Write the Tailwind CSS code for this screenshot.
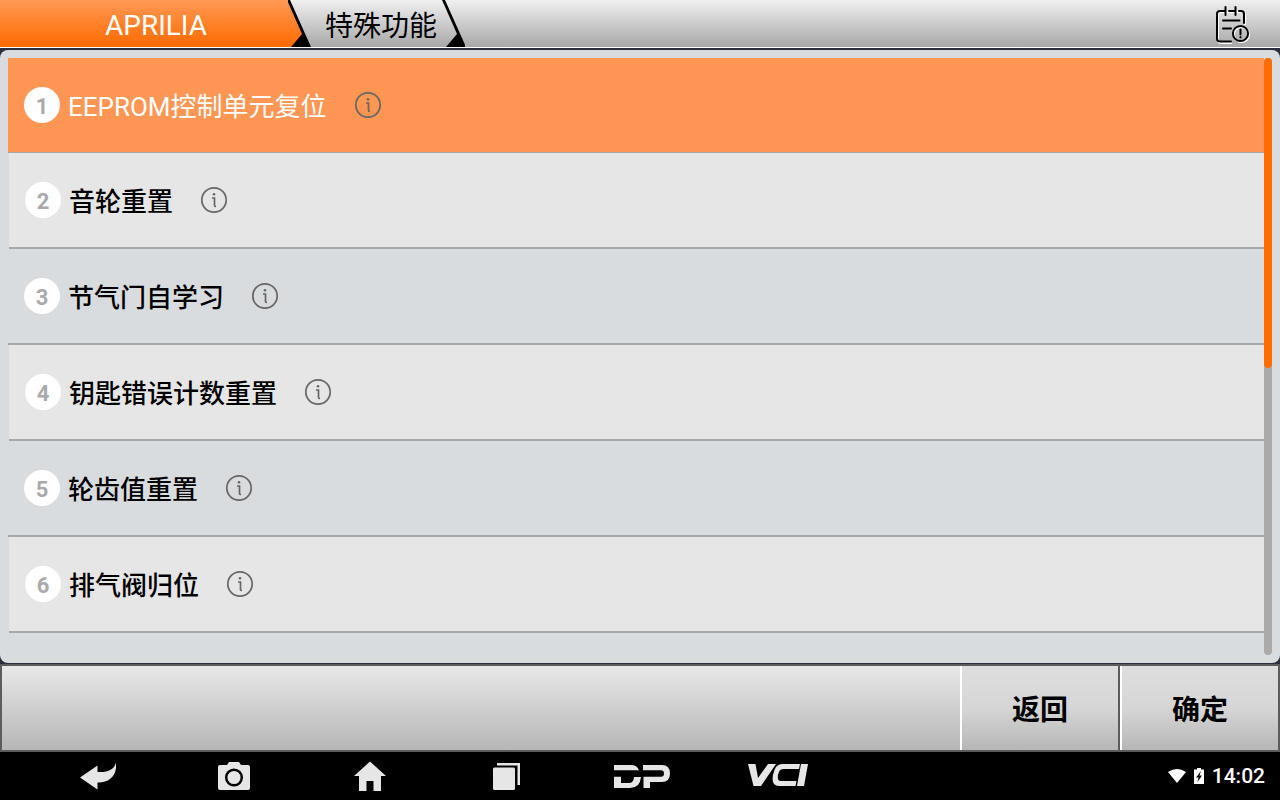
<!DOCTYPE html>
<html lang="zh">
<head>
    <meta charset="UTF-8">
    <meta name="viewport" content="width=device-width, initial-scale=1.0">
    <title>特殊功能</title>
    <script src="https://cdn.jsdelivr.net/npm/@tailwindcss/browser@4"></script>
</head>
<body class="h-screen flex flex-col bg-[#2b2e3b] text-black overflow-hidden font-[Roboto,'Noto_Sans_CJK_SC',sans-serif]">

    <svg class="hidden">
        <symbol id="info" viewBox="0 0 28 28">
            <circle cx="14" cy="14" r="12.2" fill="none" stroke="#666" stroke-width="1.7"/>
            <circle cx="14" cy="8.2" r="1.3" fill="#666"/>
            <path d="M12 12h2.500v7.500q0 1 1.500 1" fill="none" stroke="#666" stroke-width="1.7"/>
        </symbol>
    </svg>

    <!-- 顶部标签栏 -->
    <header class="h-12 shrink-0 flex border-b border-white bg-linear-to-b/srgb from-[#f0f0f0] to-[#a8a8a8] text-[28px]">
        <nav class="flex">
            <a href="#" class="w-72 flex items-center justify-center pl-6 pt-1 text-white bg-linear-to-b/srgb from-[#ff9955] to-[#ff6a00]">APRILIA</a>
            <svg class="w-6 h-full" viewBox="0 0 24 47" preserveAspectRatio="none">
                <defs>
                    <linearGradient id="orange" x1="0" y1="0" x2="0" y2="1">
                        <stop offset="0" stop-color="#ff9955"/>
                        <stop offset="1" stop-color="#ff6a00"/>
                    </linearGradient>
                </defs>
                <path d="M0 0h1l15 34-13 13H0z" fill="url(#orange)"/>
                <path d="M-1 0h3l21 47H3l11-13z"/>
            </svg>
            <a href="#" class="flex items-center pl-[13px] pr-1 pt-1.5">特殊功能</a>
            <svg class="w-6 h-full" viewBox="0 0 24 47" preserveAspectRatio="none">
                <path d="M1 0h3l21 47H5l11-13z"/>
            </svg>
        </nav>
        <button class="ml-auto mr-7 cursor-pointer" aria-label="记录">
            <svg class="w-10 h-10" viewBox="0 0 40 40" fill="none" stroke-linecap="round">
                <g stroke="#fff" stroke-width="2" transform="translate(1 1)">
                    <path d="M32 19V10q0-3-3-3H8q-3 0-3 3v25q0 3 3 3h10"/>
                    <circle cx="28.500" cy="29.500" r="7.6"/>
                </g>
                <g stroke="#000" stroke-width="2">
                    <path d="M13 7H8q-3 0-3 3v24.500q0 3 3 3h11M17 7h6.500M27 7h2q3 0 3 3v9M13.500 3v8M23.500 3v8M11 16.500h16.500M11 24.500h8"/>
                    <circle cx="28.500" cy="29.500" r="7.6"/>
                    <path d="M28.500 25.500v5M28.500 33v.4"/>
                </g>
            </svg>
        </button>
    </header>

    <!-- 功能列表 -->
    <main class="flex-1 min-h-0 mt-0.5 mb-px p-2 flex rounded-lg bg-[#d8dcdf]">
        <ol class="flex-1 overflow-hidden text-[26px]">
            <li class="h-[95px] flex items-center pl-4 bg-[#ff9653] border-b border-[#a6a6a6] text-white">
                <span class="size-9 mr-2 pt-0.5 flex items-center justify-center rounded-full bg-white text-[#aaa] text-[22px] font-bold">1</span>
                <span class="pt-1">EEPROM控制单元复位</span>
                <button class="ml-[27px] cursor-pointer" aria-label="说明"><svg class="size-7"><use href="#info"/></svg></button>
            </li>
            <li class="h-24 ml-px flex items-center pl-4 bg-[#e6e6e6] border-b-2 border-[#a8a8a8]">
                <span class="size-9 mr-2 pt-0.5 flex items-center justify-center rounded-full bg-white text-[#aaa] text-[22px] font-bold">2</span>
                <span class="pt-1 font-medium">音轮重置</span>
                <button class="ml-[27px] cursor-pointer" aria-label="说明"><svg class="size-7"><use href="#info"/></svg></button>
            </li>
            <li class="h-24 flex items-center pl-4 border-b-2 border-[#a8a8a8]">
                <span class="size-9 mr-2 pt-0.5 flex items-center justify-center rounded-full bg-white text-[#aaa] text-[22px] font-bold">3</span>
                <span class="pt-1 font-medium">节气门自学习</span>
                <button class="ml-[27px] cursor-pointer" aria-label="说明"><svg class="size-7"><use href="#info"/></svg></button>
            </li>
            <li class="h-24 ml-px flex items-center pl-4 bg-[#e6e6e6] border-b-2 border-[#a8a8a8]">
                <span class="size-9 mr-2 pt-0.5 flex items-center justify-center rounded-full bg-white text-[#aaa] text-[22px] font-bold">4</span>
                <span class="pt-1 font-medium">钥匙错误计数重置</span>
                <button class="ml-[27px] cursor-pointer" aria-label="说明"><svg class="size-7"><use href="#info"/></svg></button>
            </li>
            <li class="h-24 flex items-center pl-4 border-b-2 border-[#a8a8a8]">
                <span class="size-9 mr-2 pt-0.5 flex items-center justify-center rounded-full bg-white text-[#aaa] text-[22px] font-bold">5</span>
                <span class="pt-1 font-medium">轮齿值重置</span>
                <button class="ml-[27px] cursor-pointer" aria-label="说明"><svg class="size-7"><use href="#info"/></svg></button>
            </li>
            <li class="h-24 ml-px flex items-center pl-4 bg-[#e6e6e6] border-b-2 border-[#a8a8a8]">
                <span class="size-9 mr-2 pt-0.5 flex items-center justify-center rounded-full bg-white text-[#aaa] text-[22px] font-bold">6</span>
                <span class="pt-1 font-medium">排气阀归位</span>
                <button class="ml-[27px] cursor-pointer" aria-label="说明"><svg class="size-7"><use href="#info"/></svg></button>
            </li>
        </ol>
        <!-- 滚动条 -->
        <div class="w-2 rounded-full bg-[#aaa]">
            <div class="rounded-full bg-[#ff6c00]" style="height: 52%;"></div>
        </div>
    </main>

    <!-- 操作按钮 -->
    <div class="h-22 shrink-0 flex border-2 border-[#5c5c5c] bg-linear-to-b/srgb from-[#e8e8e8] to-[#b6b6b6] text-[28px] font-bold">
        <div class="flex-1"></div>
        <button class="w-40 pt-1.5 border-l-2 border-l-white border-r-2 border-r-[#5c5c5c] bg-linear-to-b/srgb from-[#dedede] via-[#d6d6d6] to-[#b6b6b6] cursor-pointer">返回</button>
        <button class="w-[158px] pt-1.5 border-l-2 border-l-white bg-linear-to-b/srgb from-[#dedede] via-[#d6d6d6] to-[#b6b6b6] cursor-pointer">确定</button>
    </div>

    <!-- 系统导航栏 -->
    <footer class="h-12 shrink-0 flex items-center justify-between pl-20 pr-[15px] bg-black text-[#e6e6e6]">
        <div class="flex items-center gap-[100px]">
            <button class="cursor-pointer" aria-label="返回">
                <svg class="w-9 h-8" viewBox="0 0 36 32" fill="currentColor"><path d="M0 17.500 17.500 5.500V12C28 12.500 34 10 36 2.500 37.500 16 29 23 17.500 22.500V29.500z"/></svg>
            </button>
            <button class="cursor-pointer" aria-label="截屏">
                <svg class="w-9 h-8" viewBox="0 0 36 32"><path d="M4 5h7l2-3h10l2 3h7q2 0 2 2v21q0 2-2 2H4q-2 0-2-2V7q0-2 2-2z" fill="currentColor"/><circle cx="18" cy="17.5" r="7.8" fill="none" stroke="#000" stroke-width="2.5"/></svg>
            </button>
            <button class="cursor-pointer" aria-label="主页">
                <svg class="w-9 h-8" viewBox="0 0 36 32" fill="currentColor"><path d="M18 1.500 34 16h-5v15h-7.500V21h-7v10H7V16H2z"/></svg>
            </button>
            <button class="cursor-pointer" aria-label="最近任务">
                <svg class="w-9 h-8" viewBox="0 0 36 32" fill="currentColor"><rect x="5" y="7.5" width="22" height="22.5" rx="1.5"/><path d="M9 3h23v22h-2.500V5.500H9z"/></svg>
            </button>
            <button class="-ml-2.5 cursor-pointer" aria-label="DP">
                <svg class="w-14 h-8" viewBox="0 0 56 32" fill="currentColor"><path d="M0 5h17q6 0 8 5.200H0zM0 16.800h7V23h8q4.500 0 5-6h7q-1 11-11 11H0zM29 5h19q8 0 8 8.500T48 22H36v6h-6.500V16.800H47q3 0 3-3.300t-3-3.300H29z"/></svg>
            </button>
            <button class="-ml-6 cursor-pointer" aria-label="VCI">
                <svg class="w-16 h-8" viewBox="0 0 64 32" fill="currentColor"><path d="M2 4h7.500L12 18 22 4h8L15 26H7.500zM36 4h18l-1 5H37q-4 0-5 6t3 6h15.500l-1 5H33q-8 0-6-11 2-11 9-11zM55 4h7l-4 22h-7z"/></svg>
            </button>
        </div>
        <div class="flex items-center gap-2 text-white text-[21px]">
            <svg class="w-[18px] h-[14px]" viewBox="0 0 18 14" fill="currentColor"><path d="M0 3Q9-3 18 3L9 14z"/></svg>
            <svg class="w-[10px] h-4" viewBox="0 0 10 16"><path d="M0 1.500h3V0h4v1.500h3V16H0z" fill="currentColor"/><path d="M7 3 2 9.500h2.500L3.500 14 8 7.500H5.500z"/></svg>
            <span class="pt-0.5 font-medium">14:02</span>
        </div>
    </footer>

</body>
</html>
